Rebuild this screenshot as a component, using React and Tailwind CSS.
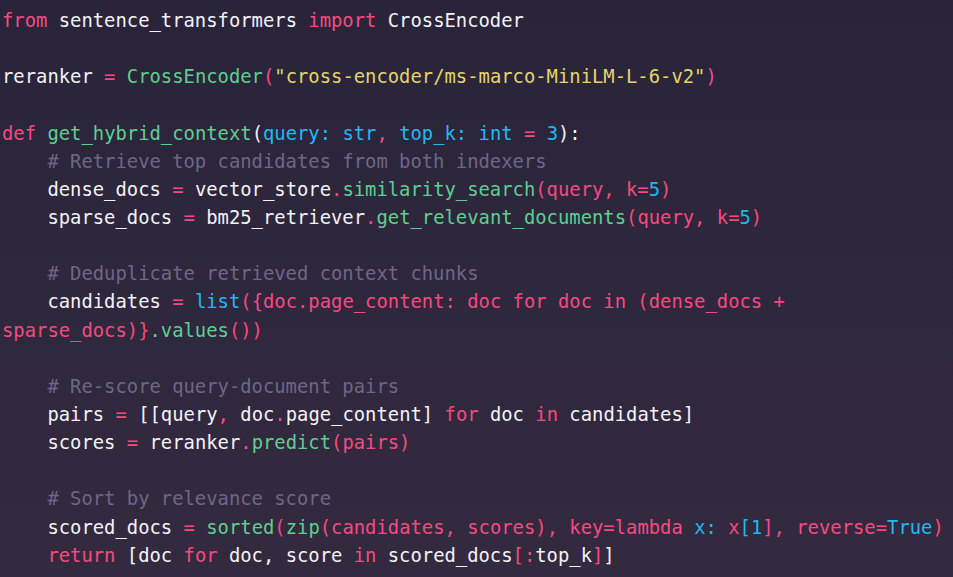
import React from 'react';

// token colours
const K = 'text-[#f7497f]'; // keyword / punctuation pink
const G = 'text-[#5dd08f]'; // function green
const B = 'text-[#1fb9f2]'; // builtin blue
const Y = 'text-[#e3d56c]'; // string yellow
const W = 'text-[#f4f2f6]'; // plain
const C = 'text-[#6e6689]'; // comment

const lines = [
    [[K, 'from'], [W, ' sentence_transformers '], [K, 'import'], [W, ' CrossEncoder']],
    [],
    [[W, 'reranker '], [K, '='], [W, ' '], [G, 'CrossEncoder'], [K, '('], [Y, '"cross-encoder/ms-marco-MiniLM-L-6-v2"'], [K, ')']],
    [],
    [[K, 'def'], [W, ' '], [G, 'get_hybrid_context'], [W, '('], [B, 'query: str'], [K, ','], [B, ' top_k: int '], [K, '='], [B, ' 3'], [W, '):']],
    [[C, '    # Retrieve top candidates from both indexers']],
    [[W, '    dense_docs '], [K, '='], [W, ' vector_store'], [K, '.'], [G, 'similarity_search'], [K, '(query, k='], [B, '5'], [K, ')']],
    [[W, '    sparse_docs '], [K, '='], [W, ' bm25_retriever'], [K, '.'], [G, 'get_relevant_documents'], [K, '(query, k='], [B, '5'], [K, ')']],
    [],
    [[C, '    # Deduplicate retrieved context chunks']],
    [[W, '    candidates '], [K, '='], [W, ' '], [B, 'list'], [K, '({doc.page_content: doc for doc in (dense_docs +']],
    [[K, 'sparse_docs)}'], [G, '.values'], [K, '())']],
    [],
    [[C, '    # Re-score query-document pairs']],
    [[W, '    pairs '], [K, '='], [W, ' [[query'], [K, ','], [W, ' doc'], [K, '.'], [W, 'page_content] '], [K, 'for'], [W, ' doc '], [K, 'in'], [W, ' candidates]']],
    [[W, '    scores '], [K, '='], [W, ' reranker'], [K, '.'], [G, 'predict'], [K, '(pairs)']],
    [],
    [[C, '    # Sort by relevance score']],
    [[W, '    scored_docs '], [K, '='], [W, ' '], [G, 'sorted'], [K, '('], [G, 'zip'], [K, '(candidates, scores), key=lambda'], [B, ' x:'], [K, ' x'], [B, '[1'], [K, '], reverse='], [B, 'True'], [K, ')']],
    [[K, '    return'], [W, ' [doc '], [K, 'for'], [W, ' doc, score '], [K, 'in'], [W, ' scored_docs'], [K, '[:'], [W, 'top_k'], [K, ']'], [W, ']']],
];

export default function App() {
    return (
        <div className="w-[953px] h-[577px] overflow-hidden bg-gradient-to-b from-[#29243a] to-[#342a3f] pt-[7px] pl-[2px] font-['DejaVu_Sans_Mono',monospace] text-[18.85px] leading-[28.15px] whitespace-pre">
            {lines.map((line, i) => (
                <div key={i} className="h-[28.15px]">
                    {line.map(([cls, txt], j) => (
                        <span key={j} className={cls}>{txt}</span>
                    ))}
                </div>
            ))}
        </div>
    );
}
